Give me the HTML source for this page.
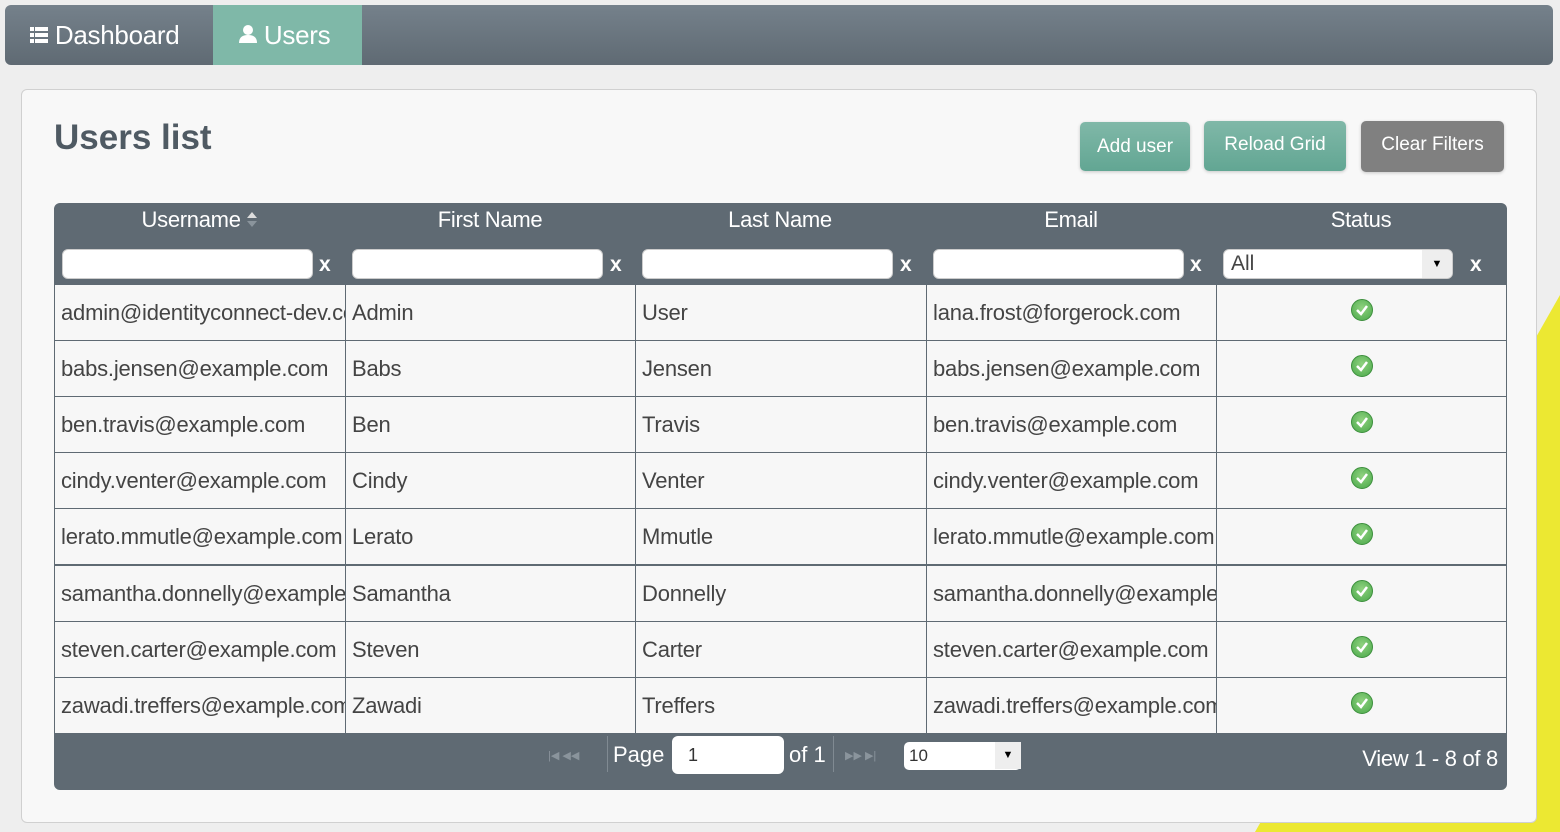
<!DOCTYPE html>
<html><head><meta charset="utf-8"><style>
*{box-sizing:border-box;margin:0;padding:0}
body{width:1560px;height:832px;background:#eeeeee;font-family:"Liberation Sans",Arial,sans-serif;position:relative;overflow:hidden}
.nav{position:absolute;left:5px;top:5px;width:1548px;height:60px;border-radius:6px;background:linear-gradient(#75818b,#5f6a73);overflow:hidden}
.tab{position:absolute;top:0;height:60px;color:#fff;font-size:26px;line-height:60px;letter-spacing:-0.3px}
.panel{position:absolute;left:21px;top:89px;width:1516px;height:734px;background:#f8f8f8;border:1px solid #d0d0d0;border-radius:6px}
h1{position:absolute;left:54px;top:118px;font-size:35px;color:#4f5a63;font-weight:bold}
.btn{position:absolute;color:#fff;font-size:19px;text-align:center;border-radius:5px;box-shadow:0 1px 3px rgba(0,0,0,.2)}
.g{background:linear-gradient(#80b8a8,#62a693)}
.grid{position:absolute;left:54px;top:203px;width:1453px;height:587px;background:#5f6a73;border-radius:6px;border:1px solid #5f6a73}
.hl{position:absolute;top:3px;color:#fff;font-size:22px;text-align:center;width:290px;letter-spacing:-0.3px}
.fi{position:absolute;top:45px;height:30px;width:251px;background:#fff;border-radius:6px;border:1px solid #ccc}
.x{position:absolute;top:49px;color:#fff;font-size:21px;font-weight:bold}
.row{position:absolute;left:0;width:1451px;height:56px;background:#f7f7f7;border-top:1px solid #5f6a73}
.c{position:absolute;top:0;height:55px;line-height:55px;font-size:22px;color:#444;padding-left:6px;overflow:hidden;white-space:nowrap;border-left:1px solid #5f6a73;letter-spacing:-0.2px}
.ok{position:absolute;left:1296px;top:14px;width:22px;height:22px;border-radius:50%;background:radial-gradient(circle at 50% 40%,#8fd27f,#4aa84a);border:1px solid #3c8f3c}
</style></head><body>
<svg style="position:absolute;left:0;top:0" width="1560" height="832"><polygon points="1560,295 1560,832 1255,832" fill="#ece832"/></svg>
<div class="nav">
<div class="tab" style="left:25px"><span style="display:inline-block;width:18px;vertical-align:middle;margin-top:-6px">
<svg width="18" height="16"><g fill="#fff"><rect x="0" y="0" width="4" height="4"/><rect x="5" y="0" width="13" height="4"/><rect x="0" y="6" width="4" height="4"/><rect x="5" y="6" width="13" height="4"/><rect x="0" y="12" width="4" height="4"/><rect x="5" y="12" width="13" height="4"/></g></svg></span> Dashboard</div>
<div class="tab" style="left:208px;width:149px;background:#7fb8a8;padding-left:26px"><svg width="18" height="18" style="vertical-align:middle;margin-top:-6px"><circle cx="9" cy="5" r="5" fill="#fff"/><path d="M0 18 Q0 10 9 10 Q18 10 18 18Z" fill="#fff"/></svg> Users</div>
</div>
<div class="panel"></div>
<h1>Users list</h1>
<div class="btn g" style="left:1080px;top:122px;width:110px;height:49px;line-height:49px">Add user</div>
<div class="btn g" style="left:1204px;top:121px;width:142px;height:50px;line-height:48px">Reload Grid</div>
<div class="btn" style="left:1361px;top:121px;width:143px;height:51px;line-height:48px;background:#808080">Clear Filters</div>
<div class="grid">
<div class="hl" style="left:0">Username <svg width="12" height="18" style="vertical-align:-1px"><path d="M1 8 L6 2 L11 8Z" fill="#ddd"/><path d="M1 11 L6 17 L11 11Z" fill="#8a949c"/></svg></div>
<div class="hl" style="left:290px">First Name</div>
<div class="hl" style="left:580px">Last Name</div>
<div class="hl" style="left:871px">Email</div>
<div class="hl" style="left:1161px">Status</div>
<div class="fi" style="left:7px"></div><div class="x" style="left:264px">x</div>
<div class="fi" style="left:297px"></div><div class="x" style="left:555px">x</div>
<div class="fi" style="left:587px"></div><div class="x" style="left:845px">x</div>
<div class="fi" style="left:878px"></div><div class="x" style="left:1135px">x</div>
<div class="fi" style="left:1168px;width:230px;padding-left:7px;font-size:21px;line-height:28px;color:#444">All<span style="position:absolute;right:0;top:0;width:30px;height:28px;background:#eee;border-radius:0 6px 6px 0;font-size:11px;text-align:center;color:#000">▼</span></div><div class="x" style="left:1415px">x</div>
<div id="rows"></div>
<div style="position:absolute;left:0;top:528px;width:1451px;height:58px">
<div style="position:absolute;left:493px;top:17px;color:#8a949c;font-size:11px">|◀ ◀◀</div>
<div style="position:absolute;left:552px;top:4px;width:1px;height:36px;background:#808a92"></div>
<div style="position:absolute;left:558px;top:10px;color:#fff;font-size:22px">Page</div>
<div style="position:absolute;left:617px;top:4px;width:112px;height:38px;background:#fff;border-radius:6px;font-size:18px;line-height:38px;padding-left:16px;color:#333">1</div>
<div style="position:absolute;left:734px;top:10px;color:#fff;font-size:22px">of 1</div>
<div style="position:absolute;left:778px;top:4px;width:1px;height:36px;background:#808a92"></div>
<div style="position:absolute;left:790px;top:17px;color:#8a949c;font-size:11px">▶▶ ▶|</div>
<div style="position:absolute;left:849px;top:10px;width:117px;height:28px;background:#fff;border-radius:5px;font-size:17px;line-height:27px;padding-left:5px;color:#333">10<span style="position:absolute;right:0;top:0;width:26px;height:27px;background:#eee;font-size:11px;text-align:center;color:#000">▼</span></div>
<div style="position:absolute;right:8px;top:14px;color:#fff;font-size:22px;letter-spacing:-0.3px">View 1 - 8 of 8</div>
</div>
</div>
<script>
var d=[["admin@identityconnect-dev.com","Admin","User","lana.frost@forgerock.com"],["babs.jensen@example.com","Babs","Jensen","babs.jensen@example.com"],["ben.travis@example.com","Ben","Travis","ben.travis@example.com"],["cindy.venter@example.com","Cindy","Venter","cindy.venter@example.com"],["lerato.mmutle@example.com","Lerato","Mmutle","lerato.mmutle@example.com"],["samantha.donnelly@example.com","Samantha","Donnelly","samantha.donnelly@example.com"],["steven.carter@example.com","Steven","Carter","steven.carter@example.com"],["zawadi.treffers@example.com","Zawadi","Treffers","zawadi.treffers@example.com"]];
var L=[0,290,580,871,1161],W=[290,290,291,290,290],h="";
d.forEach(function(r,i){h+='<div class="row" style="top:'+Math.round(80+i*56.1)+'px">';for(var j=0;j<4;j++)h+='<div class="c" style="left:'+L[j]+'px;width:'+W[j]+'px;'+(j==0?'border-left:0':'')+'">'+r[j]+'</div>';h+='<div class="c" style="left:1161px;width:290px"></div><div class="ok"><svg width="20" height="20" style="position:absolute;left:0;top:0"><path d="M5 10 L9 14 L15 6" stroke="#fff" stroke-width="2.5" fill="none"/></svg></div></div>';});
document.getElementById("rows").innerHTML=h;
</script>
</body></html>
